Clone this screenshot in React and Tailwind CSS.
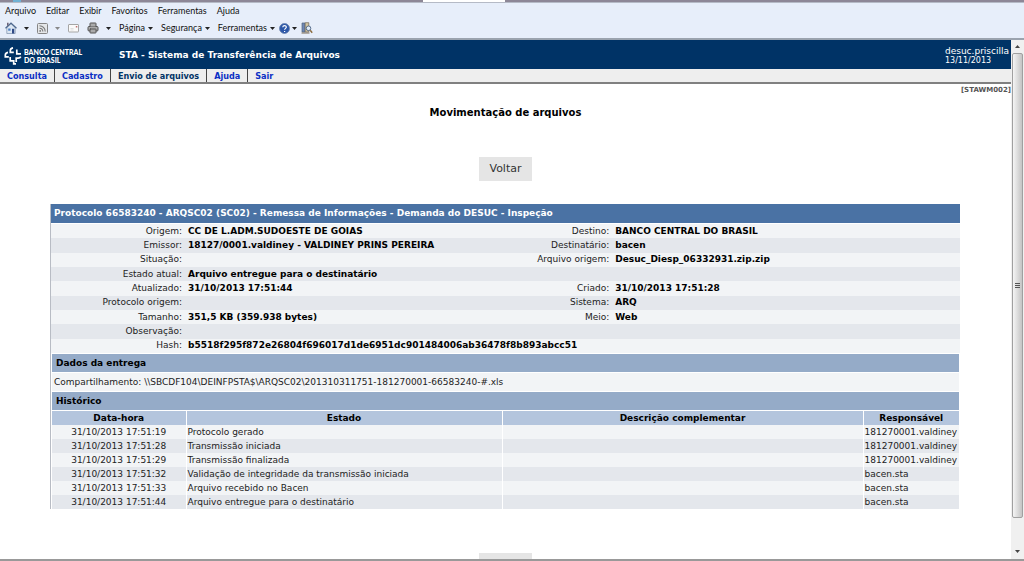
import { Printer } from 'lucide-react';

const MENUS = ['Arquivo', 'Editar', 'Exibir', 'Favoritos', 'Ferramentas', 'Ajuda'];

const TABS = [
  { label: 'Consulta' },
  { label: 'Cadastro' },
  { label: 'Envio de arquivos', active: true },
  { label: 'Ajuda' },
  { label: 'Sair' },
];

const DETAILS = [
  ['Origem:', 'CC DE L.ADM.SUDOESTE DE GOIAS', 'Destino:', 'BANCO CENTRAL DO BRASIL'],
  ['Emissor:', '18127/0001.valdiney - VALDINEY PRINS PEREIRA', 'Destinatário:', 'bacen'],
  ['Situação:', '', 'Arquivo origem:', 'Desuc_Diesp_06332931.zip.zip'],
  ['Estado atual:', 'Arquivo entregue para o destinatário'],
  ['Atualizado:', '31/10/2013 17:51:44', 'Criado:', '31/10/2013 17:51:28'],
  ['Protocolo origem:', '', 'Sistema:', 'ARQ'],
  ['Tamanho:', '351,5 KB (359.938 bytes)', 'Meio:', 'Web'],
  ['Observação:', ''],
  ['Hash:', 'b5518f295f872e26804f696017d1de6951dc901484006ab36478f8b893abcc51'],
];

const HISTORY = [
  ['31/10/2013 17:51:19', 'Protocolo gerado', '', '181270001.valdiney'],
  ['31/10/2013 17:51:28', 'Transmissão iniciada', '', '181270001.valdiney'],
  ['31/10/2013 17:51:29', 'Transmissão finalizada', '', '181270001.valdiney'],
  ['31/10/2013 17:51:32', 'Validação de integridade da transmissão iniciada', '', 'bacen.sta'],
  ['31/10/2013 17:51:33', 'Arquivo recebido no Bacen', '', 'bacen.sta'],
  ['31/10/2013 17:51:44', 'Arquivo entregue para o destinatário', '', 'bacen.sta'],
];

function Caret({ className = 'fill-[#222]' }) {
  return (
    <svg viewBox="0 0 5 3" className={`w-[5px] h-[3px] shrink-0 ${className}`} aria-hidden="true">
      <path d="M0 0h5L2.5 3z" />
    </svg>
  );
}

function HomeIcon() {
  return (
    <svg viewBox="0 0 12 12" className="w-3 h-3" aria-hidden="true">
      <path d="M1.800 5.500L6 1.800l4.200 3.700v6H1.800z" fill="#dbe6f3" stroke="#7d90ab" strokeWidth=".7" />
      <path d="M.5 6.200L6 1l5.500 5.200" fill="none" stroke="#4d678d" strokeWidth="1.200" />
      <path d="M2 .8h1.600v2L2 4.200z" fill="#6c6478" />
      <path d="M7 6.800h2.200v4.700H7z" fill="#2f4a86" />
      <path d="M3.200 6.500h2.400v2.200H3.200z" fill="#4c80c4" />
    </svg>
  );
}

function FeedIcon() {
  return (
    <svg viewBox="0 0 11 11" className="w-[11px] h-[11px]" fill="none" aria-hidden="true">
      <rect x=".5" y=".5" width="10" height="10" rx="1" fill="#e4e6e8" stroke="#858585" />
      <circle cx="3.200" cy="7.900" r=".9" fill="#777" />
      <path d="M2.500 5.200a3.300 3.300 0 0 1 3.300 3.300M2.500 2.800a5.700 5.700 0 0 1 5.700 5.700" stroke="#777" strokeWidth="1.100" />
    </svg>
  );
}

function MailIcon() {
  return (
    <svg viewBox="0 0 11 9" className="w-[11px] h-[9px]" fill="none" aria-hidden="true">
      <rect x=".5" y=".5" width="10" height="7.500" rx=".5" fill="#fafafa" stroke="#a5a5a5" />
      <path d="M2.500 4.500h3M2.500 6h3" stroke="#d2d2d2" strokeWidth=".7" />
      <path d="M7.800 2h1.500v1.500H7.800z" fill="#c07070" />
    </svg>
  );
}

function HelpIcon() {
  return (
    <svg viewBox="0 0 11 11" className="w-[11px] h-[11px]" aria-hidden="true">
      <circle cx="5.500" cy="5.500" r="5" fill="#2c57a8" stroke="#6b83ae" strokeWidth=".8" />
      <path d="M3.800 4.300c0-2.300 3.500-2.200 3.500-.1 0 1.200-1.700 1.200-1.700 2.600M5.600 7.900v1" fill="none" stroke="#fff" strokeWidth="1.200" />
    </svg>
  );
}

function ResearchIcon() {
  return (
    <svg viewBox="0 0 12 12" className="w-3 h-3" aria-hidden="true">
      <path d="M1 1h3v9H1z" fill="#6f87b5" stroke="#52647c" strokeWidth=".7" />
      <path d="M4.200.7h3.600v9.300H4.200z" fill="#d3c5a1" stroke="#6d6657" strokeWidth=".7" />
      <path d="M.5 11h8" stroke="#7b6a55" />
      <circle cx="7.500" cy="6.300" r="2.300" fill="#dfebf7" stroke="#4b6282" strokeWidth=".9" />
      <path d="M9.200 8.200l2 2.600" stroke="#8a6b3e" strokeWidth="1.400" />
    </svg>
  );
}

function BankLogo() {
  return (
    <svg viewBox="0 0 18 18" className="w-[18px] h-[18px]" fill="none" stroke="#fff" strokeWidth="1.700" aria-hidden="true">
      <path d="M9 .8C7 1.200 6.300 2.200 6.300 3.600V5.400H9.800" />
      <path d="M12.800 2.500v4.300H17" />
      <path d="M4 5.300C1.800 5.600 1.300 6.800 1.300 8.300v1.500h3.500" />
      <path d="M6.200 10v3.800h3.500V16.800H12" />
      <path d="M12.200 15v-3.800H14c1.500 0 2.300-.5 2.800-1.500" />
    </svg>
  );
}

function Browser() {
  return (
    <div className="shrink-0 border-b-2 border-[#9ba3ae] bg-[#e7eefa] font-['Lato','Open_Sans',sans-serif] text-[9px] leading-3 text-[#111]">
      <div className="flex h-[3px] border-b border-[#b5bac6] bg-[#8d8797]">
        <div className="ml-[13px] w-2 bg-[#6fb1d4]" />
        <div className="ml-[402px] w-[82px] bg-white" />
      </div>
      <nav className="flex gap-[10px] px-[5px] pt-[2px]">
        {MENUS.map(menu => (
          <button key={menu} type="button">{menu}</button>
        ))}
      </nav>
      <div className="flex h-[21px] items-center gap-2 px-[5px] pt-px">
        <button type="button" aria-label="Página inicial" className="flex items-center gap-[7px]"><HomeIcon /><Caret /></button>
        <button type="button" aria-label="Feeds" className="flex items-center gap-[7px]">
          <FeedIcon /><Caret className="fill-[#888]" />
        </button>
        <button type="button" aria-label="Ler email"><MailIcon /></button>
        <button type="button" aria-label="Imprimir" className="flex items-center gap-[7px]">
          <Printer className="h-3 w-3 fill-[#aaa] text-[#555]" /><Caret />
        </button>
        <button type="button" className="flex items-center gap-[3px]">Página<Caret /></button>
        <button type="button" className="flex items-center gap-[3px]">Segurança<Caret /></button>
        <div className="flex items-center gap-1">
          <button type="button" className="flex items-center gap-[3px]">Ferramentas<Caret /></button>
          <button type="button" aria-label="Ajuda" className="flex items-center gap-[2px]"><HelpIcon /><Caret /></button>
          <button type="button" aria-label="Pesquisar"><ResearchIcon /></button>
        </div>
      </div>
    </div>
  );
}

function Header() {
  return (
    <header>
      <div className="flex h-[29px] items-center bg-[#003366] pt-[2px] text-white">
        <div className="flex w-[119px] items-center gap-[2px] pl-1">
          <BankLogo />
          <div className="font-['Lato',sans-serif] text-[7px] leading-[8px] font-black whitespace-nowrap">
            BANCO CENTRAL<br />DO BRASIL
          </div>
        </div>
        <h1 className="flex-1 font-bold">STA - Sistema de Transferência de Arquivos</h1>
        <div className="pr-[2px] leading-[10px]">
          <div>desuc.priscilla</div>
          <div className="text-[8px]">13/11/2013</div>
        </div>
      </div>
      <nav className="flex h-[15px] items-stretch border-b-2 border-[#808080] bg-[#eee] font-['DejaVu_Sans_Condensed','DejaVu_Sans',sans-serif] leading-[14px] font-bold">
        {TABS.map(tab => (
          <a
            key={tab.label}
            href="#"
            className={`border-r border-[#444] px-[7px] last:border-r-0 ${tab.active ? 'text-[#003366]' : 'text-[#0b2fc4]'}`}
          >
            {tab.label}
          </a>
        ))}
      </nav>
    </header>
  );
}

function Details() {
  return (
    <table className="h-[129px] w-full table-fixed border-collapse leading-[13px]">
      <colgroup>
        <col className="w-[134px]" />
        <col className="w-[32%]" />
        <col className="w-[15%]" />
        <col />
      </colgroup>
      <tbody>
        {DETAILS.map(([label, value, label2, value2]) => (
          <tr key={label} className="odd:bg-[#f2f4f6] even:bg-[#e4e7ec]">
            <th scope="row" className="pr-[3px] text-right font-normal whitespace-nowrap text-[#222]">{label}</th>
            <td colSpan={label2 ? 1 : 3} className="pl-[3px] font-bold whitespace-nowrap">{value}</td>
            {label2 && <th scope="row" className="pr-[3px] text-right font-normal whitespace-nowrap text-[#222]">{label2}</th>}
            {label2 && <td className="pl-[3px] font-bold whitespace-nowrap">{value2}</td>}
          </tr>
        ))}
      </tbody>
    </table>
  );
}

function History() {
  return (
    <table className="w-full table-fixed border-collapse leading-[13px]">
      <colgroup>
        <col className="w-[134px]" />
        <col className="w-79" />
        <col />
        <col className="w-24" />
      </colgroup>
      <thead>
        <tr className="bg-[#b4c5dd]">
          {['Data-hora', 'Estado', 'Descrição complementar', 'Responsável'].map(title => (
            <th key={title} scope="col" className="border-l border-white pt-px first:border-l-0">{title}</th>
          ))}
        </tr>
      </thead>
      <tbody className="text-[#222]">
        {HISTORY.map(([date, state, description, owner]) => (
          <tr key={date} className="leading-[14px] odd:bg-[#f2f4f6] even:bg-[#e4e7ec]">
            <td className="text-center whitespace-nowrap">{date}</td>
            <td className="border-l border-white pl-px whitespace-nowrap">{state}</td>
            <td className="border-l border-white pl-px">{description}</td>
            <td className="border-l border-white pl-px whitespace-nowrap">{owner}</td>
          </tr>
        ))}
      </tbody>
    </table>
  );
}

function BackButton({ className = 'py-1' }) {
  return (
    <button type="button" className={`mx-auto block bg-[#e5e5e5] px-[10px] text-[11px] leading-4 text-[#333] ${className}`}>
      Voltar
    </button>
  );
}

function Scrollbar() {
  return (
    <div className="flex w-[13px] shrink-0 flex-col items-center bg-[#f0f0f0]" aria-hidden="true">
      <div className="flex h-[13px] items-center"><Caret className="rotate-180 fill-[#444]" /></div>
      <div className="flex w-[11px] flex-1 flex-col items-center justify-center gap-px rounded-xs border border-[#a0a0a0] bg-linear-to-r from-[#f5f5f5] to-[#c4c4c4]">
        <div className="h-px w-[5px] bg-[#555]" />
        <div className="h-px w-[5px] bg-[#555]" />
        <div className="h-px w-[5px] bg-[#555]" />
      </div>
      <div className="flex h-[41px] items-end pb-[6px]"><Caret className="fill-[#444]" /></div>
    </div>
  );
}

export default function App() {
  return (
    <div className="flex h-screen flex-col overflow-hidden border-b-2 border-[#999] bg-white font-['DejaVu_Sans',sans-serif] text-[9px] text-black">
      <Browser />
      <div className="flex min-h-0 flex-1">
        <div className="min-w-0 flex-1 overflow-hidden">
          <Header />
          <main>
            <div className="text-right text-[7px] leading-3 font-bold text-[#555]">[STAWM002]</div>
            <h2 className="mt-[9px] text-center text-[10px] leading-4 font-bold">Movimentação de arquivos</h2>
            <div className="mt-9"><BackButton /></div>

            <div className="pt-[23px] pr-[51px] pl-[50px]">
              <section className="border-l border-[#b8bcc4]">
                <h3 className="mb-px bg-[#4a72a4] px-[3px] leading-[19px] font-bold text-white">
                  Protocolo 66583240 - ARQSC02 (SC02) - Remessa de Informações - Demanda do DESUC - Inspeção
                </h3>
                <Details />
                <div className="px-px">
                  <h4 className="mt-px bg-[#95abc8] px-1 leading-[18px] font-bold">Dados da entrega</h4>
                  <p className="my-px bg-[#f2f4f6] px-[2px] leading-[18px] text-[#222]">
                    Compartilhamento: \\SBCDF104\DEINFPSTA$\ARQSC02\201310311751-181270001-66583240-#.xls
                  </p>
                  <h4 className="mb-px bg-[#95abc8] px-1 leading-[18px] font-bold">Histórico</h4>
                  <History />
                </div>
              </section>
            </div>

            <div className="mt-11"><BackButton className="py-3" /></div>
          </main>
        </div>
        <Scrollbar />
      </div>
    </div>
  );
}
